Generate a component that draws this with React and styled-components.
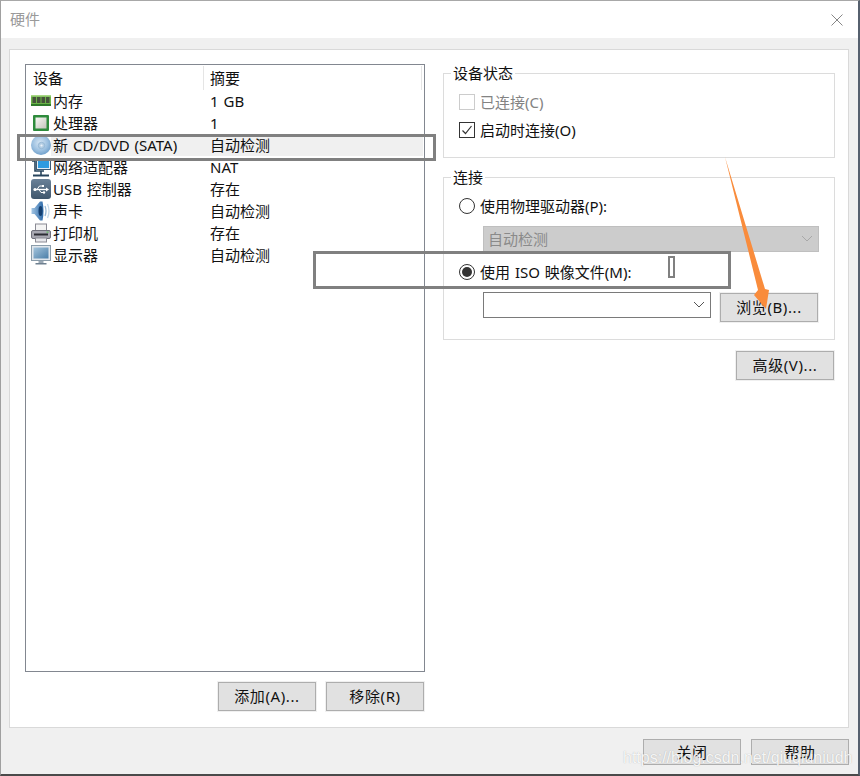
import styled, { createGlobalStyle } from "styled-components";

const GlobalStyle = createGlobalStyle`
  html, body {
    margin: 0;
    padding: 0;
    background: #fff;
  }
  body {
    font-family: "Noto Sans", "Noto Sans CJK SC", sans-serif;
    font-size: 15px;
    word-spacing: 1px;
    color: #111;
  }
`;

const Window = styled.div`
  position: relative;
  box-sizing: border-box;
  width: 860px;
  height: 776px;
  display: flex;
  flex-direction: column;
  overflow: hidden;
  border-top: 1px solid #a8a8a8;
  border-left: 1px solid #a0a0a0;
  border-right: 2px solid #56606e;
  border-bottom: 2px solid #4a4a4a;
  background: #f0f0f0;
  &::after {
    content: "";
    position: absolute;
    top: -1px;
    right: -2px;
    width: 47px;
    height: 1px;
    background: #56606e;
  }
`;

const TitleBar = styled.div`
  height: 37px;
  flex: none;
  background: #fff;
  display: flex;
  align-items: center;
  justify-content: space-between;
  padding: 0 15px 0 9px;
`;

const Title = styled.span`
  color: #9a9a9a;
  margin-bottom: 2px;
`;

const Body = styled.div`
  flex: 1;
  display: flex;
  flex-direction: column;
  padding: 11px 9px 9px 8px;
  min-height: 0;
`;

const Panel = styled.div`
  box-sizing: border-box;
  height: 679px;
  flex: none;
  background: #fff;
  border: 1px solid #d9d9d9;
  padding: 14px 13px 15px 15px;
  display: grid;
  grid-template-columns: 400px 392px;
  column-gap: 18px;
`;

const LeftColumn = styled.div`
  display: flex;
  flex-direction: column;
  gap: 10px;
  min-height: 0;
`;

const List = styled.div`
  box-sizing: border-box;
  height: 608px;
  flex: none;
  border: 1px solid #828790;
  padding-top: 1px;
`;

const ListHeader = styled.div`
  height: 24px;
  display: grid;
  grid-template-columns: 178px 1fr;
  margin-right: 2px;
`;

const HeaderCell = styled.div`
  line-height: 24px;
  padding-left: ${(p) => p.$pad}px;
  border-right: 1px solid #e5e5e5;
`;

const Row = styled.div`
  height: 22px;
  display: flex;
  padding-left: 5px;
  margin-right: 1px;
`;

const RowIcon = styled.div`
  width: 20px;
  flex: none;
  display: flex;
  align-items: center;
`;

const RowBody = styled.div`
  flex: 1;
  display: grid;
  grid-template-columns: 159px 1fr;
  line-height: 22px;
  background: ${(p) => (p.$selected ? "#f0f0f0" : "transparent")};
  white-space: pre;
`;

const RowName = styled.span`
  padding-left: 2px;
`;

const ListActions = styled.div`
  display: flex;
  justify-content: flex-end;
  gap: 10px;
  padding-right: 1px;
`;

const Button = styled.div`
  box-sizing: border-box;
  width: 98px;
  height: ${(p) => p.$height || 29}px;
  flex: none;
  margin-top: ${(p) => p.$top || 0}px;
  padding-bottom: 2px;
  display: flex;
  align-items: center;
  justify-content: center;
  background: #e1e1e1;
  border: 1px solid #adadad;
  box-shadow: ${(p) => (p.$flat ? "none" : "0 0 0 1px #f0f0f0")};
  letter-spacing: 0.6px;
  white-space: pre;
`;

const RightColumn = styled.div`
  display: flex;
  flex-direction: column;
  margin-top: -1px;
`;

const Group = styled.fieldset`
  box-sizing: border-box;
  margin: ${(p) => p.$top || 0}px 0 0;
  padding: 11px 0 ${(p) => p.$bottom}px 15px;
  border: 1px solid #dcdcdc;
  display: flex;
  flex-direction: column;
  gap: 12px;
  min-width: 0;
`;

const Legend = styled.legend`
  margin-left: -8px;
  padding: 0 2px;
  line-height: 20px;
  height: 20px;
`;

const OptionRow = styled.div`
  height: 16px;
  display: flex;
  align-items: center;
  gap: 5px;
  color: ${(p) => (p.$disabled ? "#838383" : "inherit")};
  white-space: pre;
`;

const OptionLabel = styled.span`
  line-height: 16px;
  margin-bottom: 1px;
`;

const CheckBox = styled.span`
  box-sizing: border-box;
  width: 16px;
  height: 16px;
  flex: none;
  display: flex;
  align-items: center;
  justify-content: center;
  border: 1px solid ${(p) => (p.$disabled ? "#cccccc" : "#333")};
  background: #fff;
`;

const Radio = styled.span`
  box-sizing: border-box;
  width: 16px;
  height: 16px;
  flex: none;
  display: flex;
  align-items: center;
  justify-content: center;
  border: 1px solid #333;
  border-radius: 50%;
  background: #fff;
  &::after {
    content: "";
    display: ${(p) => (p.$checked ? "block" : "none")};
    width: 10px;
    height: 10px;
    border-radius: 50%;
    background: #333;
  }
`;

const SubRow = styled.div`
  display: flex;
  align-items: flex-start;
  gap: 9px;
  padding-left: 24px;
`;

const Combo = styled.div`
  box-sizing: border-box;
  width: ${(p) => p.$width}px;
  height: 26px;
  flex: none;
  display: flex;
  align-items: center;
  justify-content: space-between;
  padding: 0 5px 2px 4px;
  background: ${(p) => (p.$disabled ? "#cccccc" : "#fff")};
  border: 1px solid ${(p) => (p.$disabled ? "#bfbfbf" : "#7a7a7a")};
  color: #8a8a8a;
`;

const AdvancedRow = styled.div`
  display: flex;
  justify-content: flex-end;
  margin-top: 11px;
  padding-right: 1px;
`;

const Footer = styled.div`
  display: flex;
  justify-content: flex-end;
  gap: 10px;
  margin-top: 11px;
`;

const Annotation = styled.div`
  position: absolute;
  box-sizing: border-box;
  left: ${(p) => p.$x - 1}px;
  top: ${(p) => p.$y - 1}px;
  width: ${(p) => p.$w}px;
  height: ${(p) => p.$h}px;
  border: ${(p) => p.$stroke || 3}px solid #808080;
  pointer-events: none;
`;

const ArrowLayer = styled.svg`
  position: absolute;
  left: 0;
  top: 0;
  pointer-events: none;
`;

const Watermark = styled.div`
  position: absolute;
  left: 622px;
  top: 747px;
  font-family: "Liberation Sans", Arial, sans-serif;
  font-size: 16px;
  word-spacing: 0;
  line-height: 20px;
  color: rgba(255, 255, 255, 0.9);
  text-shadow: 0 0 1px rgba(130, 130, 130, 0.6);
  white-space: nowrap;
`;

const Chevron = ({ color }) => (
  <svg width="12" height="7" viewBox="0 0 12 7">
    <path d="M1 1 L6 6 L11 1" fill="none" stroke={color} strokeWidth="1" />
  </svg>
);

const CloseIcon = () => (
  <svg width="12" height="12" viewBox="0 0 12 12">
    <path d="M0.5 0.5 L11.5 11.5 M11.5 0.5 L0.5 11.5" stroke="#868686" strokeWidth="1" />
  </svg>
);

const CheckMark = () => (
  <svg width="12" height="12" viewBox="0 0 12 12">
    <path d="M1.5 6.5 L4.5 9.5 L10.5 2" fill="none" stroke="#333" strokeWidth="1.2" />
  </svg>
);

const MemoryIcon = () => (
  <svg width="20" height="20" viewBox="0 0 20 20">
    <rect x="0" y="4" width="20" height="11" fill="#6cb348" />
    <rect x="0" y="4" width="20" height="1.5" fill="#a8d886" />
    <rect x="1.5" y="6" width="3.5" height="6" fill="#46543c" />
    <rect x="6" y="6" width="3.5" height="6" fill="#46543c" />
    <rect x="10.5" y="6" width="3.5" height="6" fill="#46543c" />
    <rect x="15" y="6" width="3.5" height="6" fill="#46543c" />
    <rect x="0" y="13" width="20" height="2" fill="#2f7a2a" />
  </svg>
);

const CpuIcon = () => (
  <svg width="20" height="20" viewBox="0 0 20 20">
    <defs>
      <linearGradient id="cpuCore" x1="0" y1="0" x2="1" y2="1">
        <stop offset="0" stopColor="#f8f8f4" />
        <stop offset="1" stopColor="#c4c4bc" />
      </linearGradient>
    </defs>
    <rect x="2" y="2" width="16" height="16" rx="1" fill="#2e8b3c" />
    <rect x="4.5" y="4.5" width="11" height="11" fill="url(#cpuCore)" />
  </svg>
);

const DiscIcon = () => (
  <svg width="20" height="20" viewBox="0 0 20 20">
    <defs>
      <radialGradient id="discFace" cx="0.45" cy="0.4" r="0.7">
        <stop offset="0" stopColor="#d6e6f4" />
        <stop offset="0.55" stopColor="#9cc0e0" />
        <stop offset="1" stopColor="#5f94c4" />
      </radialGradient>
    </defs>
    <circle cx="10" cy="10" r="10" fill="url(#discFace)" />
    <circle cx="10.5" cy="10.5" r="3.2" fill="#b4cee4" stroke="#8fb2d0" strokeWidth="0.8" />
    <circle cx="10.5" cy="10.5" r="1.1" fill="#eef4fa" />
  </svg>
);

const NetworkIcon = () => (
  <svg width="20" height="20" viewBox="0 0 20 20">
    <path d="M1 4 H4 V14 H13" fill="none" stroke="#27445c" strokeWidth="1.6" />
    <path d="M2 18.5 H18" fill="none" stroke="#27445c" strokeWidth="2" />
    <path d="M10 14 V18" fill="none" stroke="#27445c" strokeWidth="1.6" />
    <rect x="5.5" y="1.5" width="14" height="11" fill="#e4edf4" stroke="#3d5c78" strokeWidth="1" />
    <rect x="7" y="3" width="11" height="8" fill="#2f9be0" />
  </svg>
);

const UsbIcon = () => (
  <svg width="20" height="20" viewBox="0 0 20 20">
    <defs>
      <linearGradient id="usbFace" x1="0" y1="0" x2="0" y2="1">
        <stop offset="0" stopColor="#6a8198" />
        <stop offset="1" stopColor="#3f566c" />
      </linearGradient>
    </defs>
    <rect x="0" y="0" width="20" height="20" rx="3" fill="url(#usbFace)" />
    <path d="M3.5 10.5 H16" stroke="#fff" strokeWidth="1.3" />
    <path d="M6 10.5 L8.5 7 H11 M8 10.5 L10 13.5 H12" fill="none" stroke="#fff" strokeWidth="1" />
    <circle cx="4" cy="10.5" r="1.6" fill="#fff" />
    <path d="M15 8.5 L18 10.5 L15 12.5 Z" fill="#fff" />
    <rect x="11" y="6" width="2" height="2" fill="#fff" />
    <circle cx="13" cy="13.5" r="1.2" fill="#fff" />
  </svg>
);

const SpeakerIcon = () => (
  <svg width="20" height="20" viewBox="0 0 20 20">
    <defs>
      <linearGradient id="speakerFace" x1="0" y1="0" x2="1" y2="0">
        <stop offset="0" stopColor="#a4c6e4" />
        <stop offset="1" stopColor="#2a68a8" />
      </linearGradient>
    </defs>
    <path d="M0.5 7 H3.5 L9 0.5 H11.5 Q13.5 10 11.5 19.5 H9 L3.5 13 H0.5 Z" fill="url(#speakerFace)" />
    <ellipse cx="9.5" cy="10" rx="2" ry="5" fill="#143f70" />
    <path d="M14 5 Q16 10 14 15" fill="none" stroke="#9cbcd8" strokeWidth="1.3" />
    <path d="M16.5 3 Q19.5 10 16.5 17" fill="none" stroke="#c4d8e8" strokeWidth="1.3" />
  </svg>
);

const PrinterIcon = () => (
  <svg width="20" height="20" viewBox="0 0 20 20">
    <rect x="4.5" y="1" width="11" height="7" fill="#f4f4f4" stroke="#8a8a94" strokeWidth="1" />
    <rect x="0.5" y="7.5" width="19" height="8" rx="1.5" fill="#a8a8b2" stroke="#70707c" strokeWidth="1" />
    <rect x="3" y="10.5" width="14" height="2" fill="#2c2c34" />
    <rect x="15.5" y="8.5" width="2" height="1.2" fill="#5cc060" />
    <rect x="4.5" y="15" width="11" height="4" fill="#e8e8ec" stroke="#8a8a94" strokeWidth="1" />
  </svg>
);

const MonitorIcon = () => (
  <svg width="20" height="20" viewBox="0 0 20 20">
    <defs>
      <linearGradient id="monitorFace" x1="0" y1="0" x2="1" y2="1">
        <stop offset="0" stopColor="#a4c4dc" />
        <stop offset="1" stopColor="#4a7ea8" />
      </linearGradient>
    </defs>
    <rect x="0.5" y="0.5" width="19" height="15" fill="#e0e6ec" stroke="#8a9caa" strokeWidth="1" />
    <rect x="2.5" y="2.5" width="15" height="11" fill="url(#monitorFace)" />
    <rect x="7.5" y="16" width="5" height="2" fill="#9aa8b4" />
    <rect x="4.5" y="18" width="11" height="1.5" fill="#6e8090" />
  </svg>
);

const devices = [
  { name: "内存", summary: "1 GB", Icon: MemoryIcon },
  { name: "处理器", summary: "1", Icon: CpuIcon },
  { name: "新 CD/DVD (SATA)", summary: "自动检测", Icon: DiscIcon, selected: true },
  { name: "网络适配器", summary: "NAT", Icon: NetworkIcon },
  { name: "USB 控制器", summary: "存在", Icon: UsbIcon },
  { name: "声卡", summary: "自动检测", Icon: SpeakerIcon },
  { name: "打印机", summary: "存在", Icon: PrinterIcon },
  { name: "显示器", summary: "自动检测", Icon: MonitorIcon },
];

const App = () => {
  return (
    <>
      <GlobalStyle />
      <Window>
        <TitleBar>
          <Title>硬件</Title>
          <CloseIcon />
        </TitleBar>
        <Body>
          <Panel>
            <LeftColumn>
              <List>
                <ListHeader>
                  <HeaderCell $pad={7}>设备</HeaderCell>
                  <HeaderCell $pad={6}>摘要</HeaderCell>
                </ListHeader>
                {devices.map(({ name, summary, Icon, selected }) => (
                  <Row key={name}>
                    <RowIcon>
                      <Icon />
                    </RowIcon>
                    <RowBody $selected={selected}>
                      <RowName>{name}</RowName>
                      <span>{summary}</span>
                    </RowBody>
                  </Row>
                ))}
              </List>
              <ListActions>
                <Button>添加(A)...</Button>
                <Button>移除(R)</Button>
              </ListActions>
            </LeftColumn>
            <RightColumn>
              <Group $bottom={19}>
                <Legend>设备状态</Legend>
                <OptionRow $disabled>
                  <CheckBox $disabled />
                  <OptionLabel>已连接(C)</OptionLabel>
                </OptionRow>
                <OptionRow>
                  <CheckBox>
                    <CheckMark />
                  </CheckBox>
                  <OptionLabel>启动时连接(O)</OptionLabel>
                </OptionRow>
              </Group>
              <Group $top={9} $bottom={17}>
                <Legend>连接</Legend>
                <OptionRow>
                  <Radio />
                  <OptionLabel>使用物理驱动器(P):</OptionLabel>
                </OptionRow>
                <SubRow>
                  <Combo $width={336} $disabled>
                    自动检测
                    <Chevron color="#a8a8a8" />
                  </Combo>
                </SubRow>
                <OptionRow>
                  <Radio $checked />
                  <OptionLabel>使用 ISO 映像文件(M):</OptionLabel>
                </OptionRow>
                <SubRow>
                  <Combo $width={228}>
                    <span />
                    <Chevron color="#555" />
                  </Combo>
                  <Button $top={1}>浏览(B)...</Button>
                </SubRow>
              </Group>
              <AdvancedRow>
                <Button>高级(V)...</Button>
              </AdvancedRow>
            </RightColumn>
          </Panel>
          <Footer>
            <Button $flat $height={26}>关闭</Button>
            <Button $flat $height={26}>帮助</Button>
          </Footer>
        </Body>

        <Annotation $x={17} $y={134} $w={419} $h={27} />
        <Annotation $x={313} $y={251} $w={418} $h={38} />
        <Annotation $x={668} $y={256} $w={7} $h={22} $stroke={2} />
        <ArrowLayer width="860" height="776" viewBox="1 1 860 776">
          <polygon points="725,157 765,289 769,290 766,309 754,295 758,290" fill="#f98c3c" />
        </ArrowLayer>
        <Watermark>https://blog.csdn.net/qiuqiuniudh</Watermark>
      </Window>
    </>
  );
};

export default App;
